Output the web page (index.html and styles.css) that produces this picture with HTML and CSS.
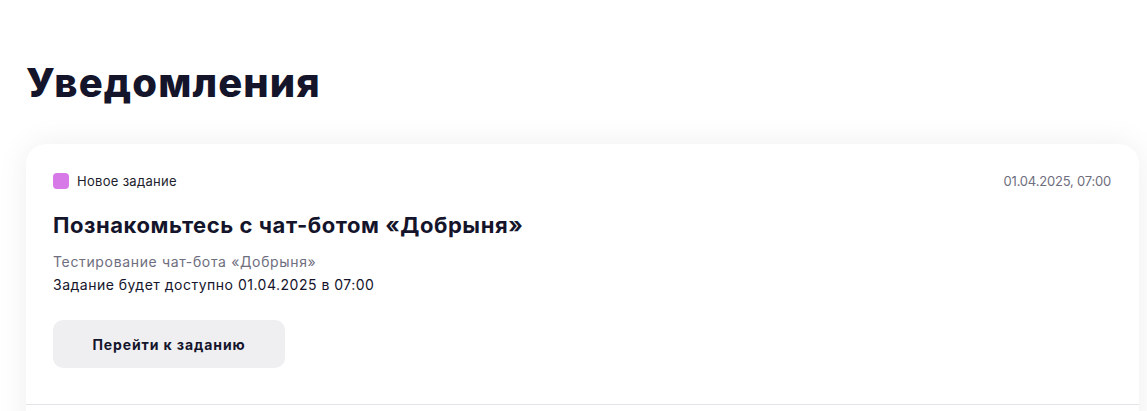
FILE: index.html
```html
<!DOCTYPE html>
<html lang="ru">
<head>
<meta charset="utf-8">
<title>Уведомления</title>
<link rel="stylesheet" href="styles.css">
</head>
<body>
<main class="page">
  <h1 class="page-title">Уведомления</h1>
  <section class="card">
    <div class="card-body">
      <div class="card-meta">
        <div class="tag"><span class="tag-dot"></span><span class="tag-label">Новое задание</span></div>
        <div class="date">01.04.2025, 07:00</div>
      </div>
      <h2 class="card-title">Познакомьтесь с чат-ботом «Добрыня»</h2>
      <p class="card-sub">Тестирование чат-бота «Добрыня»</p>
      <p class="card-text">Задание будет доступно 01.04.2025 в 07:00</p>
      <button class="btn" type="button">Перейти к заданию</button>
    </div>
    <div class="card-next"></div>
  </section>
</main>
</body>
</html>
```

FILE: styles.css
```css
html, body {
  margin: 0;
  padding: 0;
  background: #ffffff;
}
body {
  font-family: "Inter", "DejaVu Sans", sans-serif;
  color: #14142b;
  overflow: hidden;
}
.page {
  padding: 58px 8px 0 26px;
}
.page-title {
  margin: 0 0 36px 0;
  font-size: 40px;
  line-height: 50px;
  font-weight: 800;
  color: #14142b;
  letter-spacing: 1.1px;
}
.card {
  background: #ffffff;
  border-radius: 20px 20px 0 0;
  box-shadow: 0 0 32px rgba(20, 20, 60, 0.07);
}
.card-body {
  padding: 28px 28px 36px 27px;
  border-bottom: 1px solid #e4e4e8;
}
.card-meta {
  display: flex;
  justify-content: space-between;
  align-items: center;
  height: 18px;
}
.tag {
  display: flex;
  align-items: center;
  gap: 8px;
}
.tag-dot {
  width: 16px;
  height: 16px;
  border-radius: 4px;
  background: #d879e8;
}
.tag-label {
  font-size: 13px;
  color: #1d1d2c;
  letter-spacing: 0.3px;
}
.date {
  font-size: 13px;
  color: #6e6e7e;
  letter-spacing: -0.2px;
}
.card-title {
  margin: 21px 0 0 0;
  font-size: 22px;
  line-height: 28px;
  font-weight: 700;
  color: #14142b;
  letter-spacing: 0.55px;
}
.card-sub {
  margin: 12px 0 0 0;
  font-size: 14px;
  line-height: 22px;
  color: #6e6e7e;
  letter-spacing: 0.65px;
}
.card-text {
  margin: 1px 0 0 0;
  font-size: 14px;
  line-height: 22px;
  color: #14142b;
  letter-spacing: 0.5px;
}
.btn {
  display: block;
  margin-top: 24px;
  width: 232px;
  height: 48px;
  border: none;
  border-radius: 10px;
  background: #efeff2;
  font-family: inherit;
  font-size: 14px;
  font-weight: 700;
  color: #14142b;
  letter-spacing: 0.9px;
  cursor: pointer;
}
.card-next {
  height: 40px;
}
```
